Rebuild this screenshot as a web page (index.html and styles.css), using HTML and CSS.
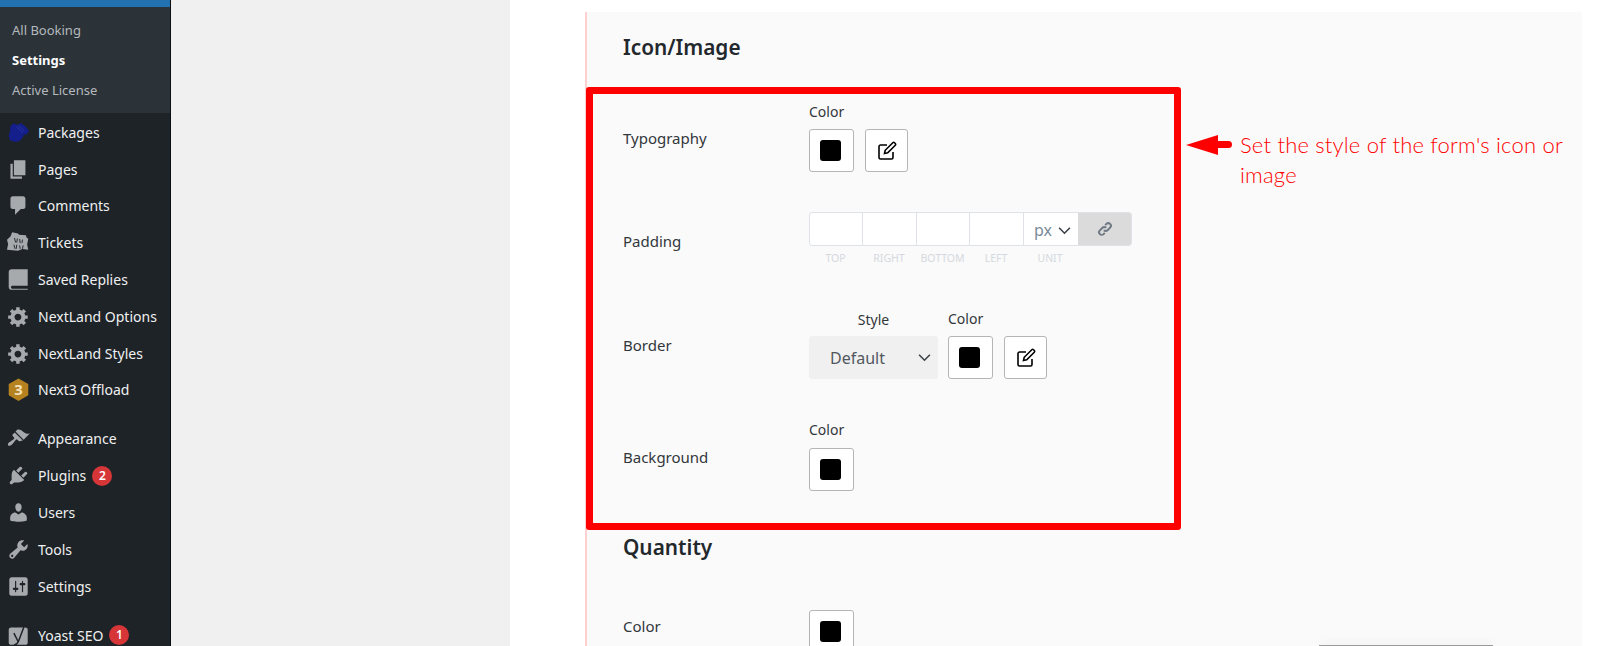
FILE: index.html
```html
<!DOCTYPE html>
<html>
    <head>
        <meta charset="utf-8">
        <title>Settings</title>
        <link rel="stylesheet" href="styles.css">
    </head>
    <body>
        <div class="sidebar">
            <div class="current"></div>
            <div class="submenu">
                <div class="sub-item">All Booking</div>
                <div class="sub-item active">Settings</div>
                <div class="sub-item">Active License</div>
            </div>
            <div class="menu">
                <div class="item">
                    <svg class="icon" viewBox="0 0 20 20"><path class="blue" d="M3 4.500L6 2l3 1.500L12 2l4 2.500 3 4-1.500 3-3 .5-1 2.500-3 3L6 18l-3.500-1.500L1.500 13l1-3.500z"/><path class="blue-line" d="M8 5l6 5M10 4l5 4.500"/></svg>
                    <span>Packages</span>
                </div>
                <div class="item">
                    <svg class="icon" viewBox="0 0 20 20"><path d="M6 15V2h10v13H6zm-1 1h8v2H3V5h2v11z"/></svg>
                    <span>Pages</span>
                </div>
                <div class="item">
                    <svg class="icon" viewBox="0 0 20 20"><path d="M5 2h9c1.100 0 2 .9 2 2v7c0 1.100-.9 2-2 2h-2l-5 5v-5H5c-1.100 0-2-.9-2-2V4c0-1.100.9-2 2-2z"/></svg>
                    <span>Comments</span>
                </div>
                <div class="item">
                    <svg class="icon" viewBox="0 0 20 20"><path d="M4.500 1l5 1.200 1 1 6 .5 .5 2 1.500 1-1 5 1 4.500-5-.5-4 1.500-9.500-1 1-5-1-3.500 3-3z"/><path class="ticket-line" d="M6.500 6l1 4M9 6.500l-.5 3.500M11 7l.5 3.500M13.500 7.500l-.5 3M6 12l1 3.500M8.500 12l-.5 3.500M11 12.500l.5 3M14 12.500l-.5 3"/></svg>
                    <span>Tickets</span>
                </div>
                <div class="item">
                    <svg class="icon" viewBox="0 0 20 20"><path d="M4 1h14v14.500H5c-1 0-1.600.5-1.600 1.200S4 18 5 18h13v1H4c-1.600 0-2.500-1-2.500-2.500V3.500C1.500 2 2.500 1 4 1z"/></svg>
                    <span>Saved Replies</span>
                </div>
                <div class="item">
                    <svg class="icon" viewBox="0 0 20 20"><path d="M18 12h-2.180c-.17.7-.44 1.350-.81 1.930l1.540 1.540-2.100 2.100-1.540-1.540c-.58.36-1.230.63-1.910.79V19H8v-2.180c-.68-.16-1.330-.43-1.910-.79l-1.540 1.540-2.120-2.120 1.540-1.540c-.36-.58-.63-1.230-.79-1.910H1V9.030h2.170c.16-.7.44-1.350.8-1.940L2.430 5.550l2.100-2.100 1.540 1.540c.58-.37 1.240-.64 1.930-.81V2h3v2.180c.68.16 1.330.43 1.910.79l1.540-1.540 2.120 2.120-1.540 1.540c.36.59.64 1.240.8 1.940H18V12zm-8.500 1.500c1.660 0 3-1.340 3-3s-1.340-3-3-3-3 1.340-3 3 1.340 3 3 3z"/></svg>
                    <span>NextLand Options</span>
                </div>
                <div class="item">
                    <svg class="icon" viewBox="0 0 20 20"><path d="M18 12h-2.180c-.17.7-.44 1.350-.81 1.930l1.540 1.540-2.100 2.100-1.540-1.540c-.58.36-1.230.63-1.910.79V19H8v-2.180c-.68-.16-1.330-.43-1.910-.79l-1.540 1.540-2.120-2.120 1.540-1.540c-.36-.58-.63-1.230-.79-1.910H1V9.030h2.170c.16-.7.44-1.350.8-1.940L2.430 5.550l2.100-2.100 1.540 1.540c.58-.37 1.240-.64 1.930-.81V2h3v2.180c.68.16 1.330.43 1.910.79l1.540-1.540 2.120 2.120-1.540 1.540c.36.59.64 1.240.8 1.940H18V12zm-8.500 1.500c1.660 0 3-1.340 3-3s-1.340-3-3-3-3 1.340-3 3 1.340 3 3 3z"/></svg>
                    <span>NextLand Styles</span>
                </div>
                <div class="item">
                    <svg class="icon" viewBox="0 0 20 20"><path class="gold" d="M10 .500l8.500 4.800v9.800L10 20l-8.500-4.900V5.300z"/><text class="hex-num" x="10" y="15">3</text></svg>
                    <span>Next3 Offload</span>
                </div>
                <div class="item gap">
                    <svg class="icon" viewBox="0 0 20 20"><path d="M14.480 11.060L7.410 3.990l1.500-1.500c.5-.56 2.300-.47 3.510.32 1.210.8 1.430 1.280 2.910 2.100 1.180.64 2.450 1.260 4.450.85zm-.71.71L6.700 4.700 4.930 6.470c-.39.39-.39 1.020 0 1.410l1.060 1.060c.39.39.39 1.030 0 1.420-.6.6-1.430 1.110-2.210 1.690-.35.26-.7.53-1.010.84C1.430 13.230.4 14.910.85 15.750c.05.1.12.18.2.26.08.08.16.14.26.2.84.45 2.520-.58 3.870-1.930.31-.31.58-.66.84-1.010.58-.78 1.090-1.610 1.690-2.210.39-.39 1.030-.39 1.420 0l1.060 1.060c.39.39 1.020.39 1.410 0z"/></svg>
                    <span>Appearance</span>
                </div>
                <div class="item">
                    <svg class="icon" viewBox="0 0 20 20"><path d="M13.110 4.360L9.870 7.600 8 5.730l3.240-3.240c.35-.34 1.050-.2 1.560.32.52.51.66 1.210.31 1.550zm-8 1.770l.91-1.120 9.010 9.010-1.190.84c-.71.71-2.630 1.160-3.820 1.160H6.140L4.900 17.260c-.59.59-1.540.59-2.120 0-.59-.58-.59-1.530 0-2.120l1.240-1.240v-3.880c0-1.130.4-3.190 1.090-3.890zm7.260 3.970l3.240-3.240c.34-.35 1.040-.21 1.550.31.52.51.66 1.210.31 1.550l-3.240 3.250z"/></svg>
                    <span>Plugins</span>
                    <span class="badge">2</span>
                </div>
                <div class="item">
                    <svg class="icon" viewBox="0 0 20 20"><path d="M10 9.250c-2.270 0-2.730-3.440-2.730-3.440C7 4.020 7.820 2 9.970 2c2.160 0 2.980 2.020 2.710 3.810 0 0-.41 3.440-2.680 3.440zm0 2.570L12.720 10c2.390 0 4.520 2.330 4.520 4.530v2.490s-3.650 1.130-7.240 1.130c-3.650 0-7.240-1.130-7.240-1.130v-2.490c0-2.250 1.940-4.480 4.470-4.480z"/></svg>
                    <span>Users</span>
                </div>
                <div class="item">
                    <svg class="icon" viewBox="0 0 20 20"><path d="M16.680 9.770c-1.340 1.340-3.300 1.670-4.950.99l-5.410 6.520c-.99.99-2.590.99-3.580 0s-.99-2.590 0-3.570l6.520-5.420c-.68-1.650-.35-3.610.99-4.950 1.280-1.280 3.120-1.620 4.720-1.060l-2.890 2.890 2.820 2.820 2.860-2.870c.53 1.580.18 3.390-1.080 4.650zM3.810 16.210c.4.39 1.040.39 1.430 0 .4-.4.4-1.040 0-1.430-.39-.4-1.030-.4-1.430 0-.39.39-.39 1.030 0 1.430z"/></svg>
                    <span>Tools</span>
                </div>
                <div class="item">
                    <svg class="icon" viewBox="0 0 20 20"><path d="M18 16V4c0-1.100-.9-2-2-2H4c-1.100 0-2 .9-2 2v12c0 1.100.9 2 2 2h12c1.100 0 2-.9 2-2zM8 11h1c.55 0 1 .45 1 1s-.45 1-1 1H8v1.500c0 .28-.22.5-.5.5s-.5-.22-.5-.5V13H6c-.55 0-1-.45-1-1s.45-1 1-1h1V5.500c0-.28.22-.5.5-.5s.5.22.5.5V11zm5-2h-1c-.55 0-1-.45-1-1s.45-1 1-1h1V5.500c0-.28.22-.5.5-.5s.5.22.5.5V7h1c.55 0 1 .45 1 1s-.45 1-1 1h-1v5.500c0 .28-.22.5-.5.5s-.5-.22-.5-.5V9z"/></svg>
                    <span>Settings</span>
                </div>
                <div class="item gap">
                    <svg class="icon" viewBox="0 0 20 20"><path d="M3.500 3H16c1.200 0 2 .8 2 2v11c0 1.200-.8 2-2 2H3.500c-1.200 0-2-.8-2-2V5c0-1.200.8-2 2-2z"/><path class="yoast-line" d="M6 8l3.500 7M15.500 .500L10 15c-.8 2-2 3-4 3.500"/></svg>
                    <span>Yoast SEO</span>
                    <span class="badge">1</span>
                </div>
            </div>
        </div>
        <div class="gutter"></div>
        <div class="content">
            <div class="panel">
                <h2 class="title">Icon/Image</h2>

                <div class="row first">
                    <div class="label">Typography</div>
                    <div>
                        <div class="cap">Color</div>
                        <div class="controls">
                            <div class="swatch"><i></i></div>
                            <div class="edit">
                                <svg viewBox="0 0 20 20"><path d="M10 4H3.500C2.700 4 2 4.700 2 5.500v11c0 .8.7 1.500 1.500 1.500h11c.8 0 1.500-.7 1.500-1.500V11"/><path d="M7.500 12.500l.7-3.200 7.600-7.600c.5-.5 1.200-.5 1.700 0l.8.8c.5.5.5 1.200 0 1.700l-7.600 7.600z"/></svg>
                            </div>
                        </div>
                    </div>
                </div>

                <div class="row padding-row">
                    <div class="label">Padding</div>
                    <div>
                        <div class="dims">
                            <div class="cell w1"></div>
                            <div class="cell w2"></div>
                            <div class="cell w3"></div>
                            <div class="cell w4"></div>
                            <div class="cell unit">
                                <span>px</span>
                                <svg class="chev" viewBox="0 0 12 8"><path d="M1 1.500L6 6.500l5-5"/></svg>
                            </div>
                            <div class="link">
                                <svg viewBox="0 0 16 16"><path d="M6.800 9.200a2.600 2.600 0 0 0 3.700 0l2.600-2.600a2.600 2.600 0 0 0-3.700-3.700L8.200 4.100"/><path d="M9.200 6.800a2.600 2.600 0 0 0-3.700 0l-2.600 2.600a2.600 2.600 0 0 0 3.700 3.700l1.200-1.200"/></svg>
                            </div>
                        </div>
                        <div class="dim-caps">
                            <span class="w1">TOP</span>
                            <span class="w2">RIGHT</span>
                            <span class="w3">BOTTOM</span>
                            <span class="w4">LEFT</span>
                            <span class="w5">UNIT</span>
                        </div>
                    </div>
                </div>

                <div class="row border-row">
                    <div class="label">Border</div>
                    <div class="border-controls">
                        <div>
                            <div class="cap style-cap">Style</div>
                            <div class="select">
                                <span>Default</span>
                                <svg class="chev" viewBox="0 0 12 8"><path d="M1 1.500L6 6.500l5-5"/></svg>
                            </div>
                        </div>
                        <div>
                            <div class="cap">Color</div>
                            <div class="controls">
                                <div class="swatch"><i></i></div>
                                <div class="edit">
                                    <svg viewBox="0 0 20 20"><path d="M10 4H3.500C2.700 4 2 4.700 2 5.500v11c0 .8.7 1.500 1.500 1.500h11c.8 0 1.500-.7 1.500-1.500V11"/><path d="M7.500 12.500l.7-3.200 7.600-7.600c.5-.5 1.200-.5 1.700 0l.8.8c.5.5.5 1.200 0 1.700l-7.600 7.600z"/></svg>
                                </div>
                            </div>
                        </div>
                    </div>
                </div>

                <div class="row bg-row">
                    <div class="label">Background</div>
                    <div>
                        <div class="cap">Color</div>
                        <div class="controls">
                            <div class="swatch"><i></i></div>
                        </div>
                    </div>
                </div>

                <h2 class="title quantity">Quantity</h2>

                <div class="row color-row">
                    <div class="label">Color</div>
                    <div class="swatch"><i></i></div>
                </div>
            </div>
        </div>

        <!-- annotation drawn over the screenshot -->
        <div class="red-box"></div>
        <svg class="arrow" viewBox="0 0 46 20"><path d="M0 10L32 0v6h10.500a3.500 3.500 0 0 1 0 7H32v7z"/></svg>
        <div class="note">Set the style of the form's icon or image</div>
        <div class="floating"></div>
    </body>
</html>
```

FILE: styles.css
```css
html,
body {
    margin: 0;
    height: 646px;
    overflow: hidden;
}
body {
    display: flex;
    position: relative;
    font-family: "Noto Sans", "Open Sans", sans-serif;
    background-color: #ffffff;
}

/* admin sidebar */
.sidebar {
    width: 170px;
    flex-shrink: 0;
    background-color: #1d2327;
    border-right: 1px solid #0c0f11;
    color: #f0f0f1;
}
.current {
    height: 7px;
    background-color: #2271b1;
}
.submenu {
    height: 106px;
    box-sizing: border-box;
    padding-top: 8px;
    background-color: #2c3338;
}
.sub-item {
    height: 30px;
    line-height: 30px;
    padding-left: 12px;
    font-size: 13px;
    color: #b4b9be;
}
.sub-item.active {
    font-weight: 700;
    color: #ffffff;
}
.menu {
    padding-top: 1px;
}
.item {
    display: flex;
    align-items: center;
    height: 36.800px;
    font-size: 14px;
}
.item.gap {
    margin-top: 12.200px;
}
.icon {
    width: 23px;
    height: 23px;
    margin: 0 8.500px 0 6.500px;
    flex-shrink: 0;
    fill: #a7aaad;
}
.icon .blue {
    fill: #141f8c;
}
.icon .blue-line {
    fill: none;
    stroke: #2b3a9e;
    stroke-width: 0.7;
}
.icon .gold {
    fill: #b5821f;
}
.icon .ticket-line {
    fill: none;
    stroke: #1d2327;
    stroke-width: 0.8;
}
.icon .yoast-line {
    fill: none;
    stroke: #1d2327;
    stroke-width: 1.300;
}
.hex-num {
    font-size: 13px;
    font-weight: 700;
    fill: #f3e2bd;
    text-anchor: middle;
}
.badge {
    width: 20px;
    height: 20px;
    margin-left: 6px;
    border-radius: 50%;
    background-color: #d63638;
    color: #ffffff;
    font-size: 12px;
    font-weight: 600;
    line-height: 20px;
    text-align: center;
}

/* grey strip beside the menu */
.gutter {
    width: 339px;
    flex-shrink: 0;
    background-color: #f0f0f1;
}

/* settings panel */
.content {
    flex: 1;
    padding: 12px 18px 0 75px;
}
.panel {
    height: 634px;
    box-sizing: border-box;
    padding: 21px 0 0 36px;
    background-color: #fafafa;
    border-left: 2px solid #ffd0d0;
    color: #32373c;
}
.title {
    margin: 0;
    height: 28px;
    font-size: 20.800px;
    font-weight: 600;
    line-height: 28px;
    color: #23282d;
}
.title.quantity {
    margin-top: 42px;
}
.row {
    display: flex;
    align-items: center;
}
.row.first {
    margin-top: 42px;
}
.padding-row {
    margin-top: 40px;
}
.border-row {
    margin-top: 40px;
}
.bg-row {
    margin-top: 42px;
}
.color-row {
    margin-top: 49px;
}
.label {
    width: 186px;
    flex-shrink: 0;
    margin-top: 1px;
    font-size: 15px;
    line-height: 20px;
}
.padding-row .label,
.border-row .label {
    margin-top: 0;
}
.color-row .label {
    margin: 0 0 12px;
}
.cap {
    height: 18px;
    margin-bottom: 8px;
    font-size: 14px;
    line-height: 18px;
}
.style-cap {
    margin-top: 1px;
    margin-bottom: 7px;
    text-align: center;
}
.bg-row .cap {
    margin-bottom: 9px;
}
.controls {
    display: flex;
    gap: 11px;
}
.swatch,
.edit {
    display: flex;
    align-items: center;
    justify-content: center;
    box-sizing: border-box;
    height: 43px;
    background-color: #ffffff;
    border: 1px solid #b5b5b5;
    border-radius: 3px;
}
.swatch {
    width: 45px;
    padding-right: 2px;
}
.swatch i {
    width: 21px;
    height: 21px;
    background-color: #000000;
    border-radius: 3px;
}
.edit {
    width: 43px;
}
.edit svg {
    width: 20px;
    height: 20px;
    fill: none;
    stroke: #000000;
    stroke-width: 1.600;
}

/* padding inputs */
.dims {
    display: flex;
    height: 34px;
    width: 323px;
    box-sizing: border-box;
    background-color: #ffffff;
    border: 1px solid #dfe3e8;
    border-radius: 3px;
    overflow: hidden;
}
.cell {
    box-sizing: border-box;
    border-right: 1px solid #dfe3e8;
}
.w1 {
    width: 53px;
}
.w2 {
    width: 54px;
}
.w3 {
    width: 53px;
}
.w4 {
    width: 54px;
}
.w5 {
    width: 54px;
}
.unit {
    display: flex;
    align-items: center;
    justify-content: space-between;
    width: 54px;
    padding: 2px 7px 0 10px;
    border-right: none;
    font-size: 16px;
    color: #7a8a99;
}
.link {
    display: flex;
    flex: 1;
    align-items: center;
    justify-content: center;
    background-color: #dbdbdb;
}
.link svg {
    width: 16px;
    height: 16px;
    fill: none;
    stroke: #6f7a85;
    stroke-width: 2;
}
.chev {
    width: 13px;
    height: 9px;
    fill: none;
    stroke: #3c434a;
    stroke-width: 1.500;
}
.dim-caps {
    display: flex;
    height: 24px;
    align-items: center;
    font-size: 10.500px;
    color: #d5d9de;
}
.dim-caps span {
    flex-shrink: 0;
    text-align: center;
}

/* border row */
.border-controls {
    display: flex;
    gap: 10px;
}
.select {
    display: flex;
    align-items: center;
    justify-content: space-between;
    box-sizing: border-box;
    width: 129px;
    height: 43px;
    padding: 0 7px 0 21px;
    background-color: #f0f0f0;
    border-radius: 3px;
    font-size: 16px;
    color: #50575e;
}

/* annotation */
.red-box {
    position: absolute;
    left: 586px;
    top: 87px;
    width: 595px;
    height: 443px;
    box-sizing: border-box;
    border: 7px solid #ff0000;
    border-radius: 3px;
}
.arrow {
    position: absolute;
    left: 1186px;
    top: 135px;
    width: 46px;
    height: 20px;
    fill: #ff0000;
}
.note {
    position: absolute;
    left: 1240px;
    top: 130px;
    width: 335px;
    font-family: "Lato", sans-serif;
    font-size: 22px;
    font-weight: 300;
    line-height: 30px;
    letter-spacing: 0.2px;
    color: #ff0000;
}
.floating {
    position: absolute;
    left: 1319px;
    top: 645px;
    width: 174px;
    height: 1px;
    background-color: #9a9a9a;
    box-shadow: 0 -2px 8px rgba(0, 0, 0, 0.18);
}
```
